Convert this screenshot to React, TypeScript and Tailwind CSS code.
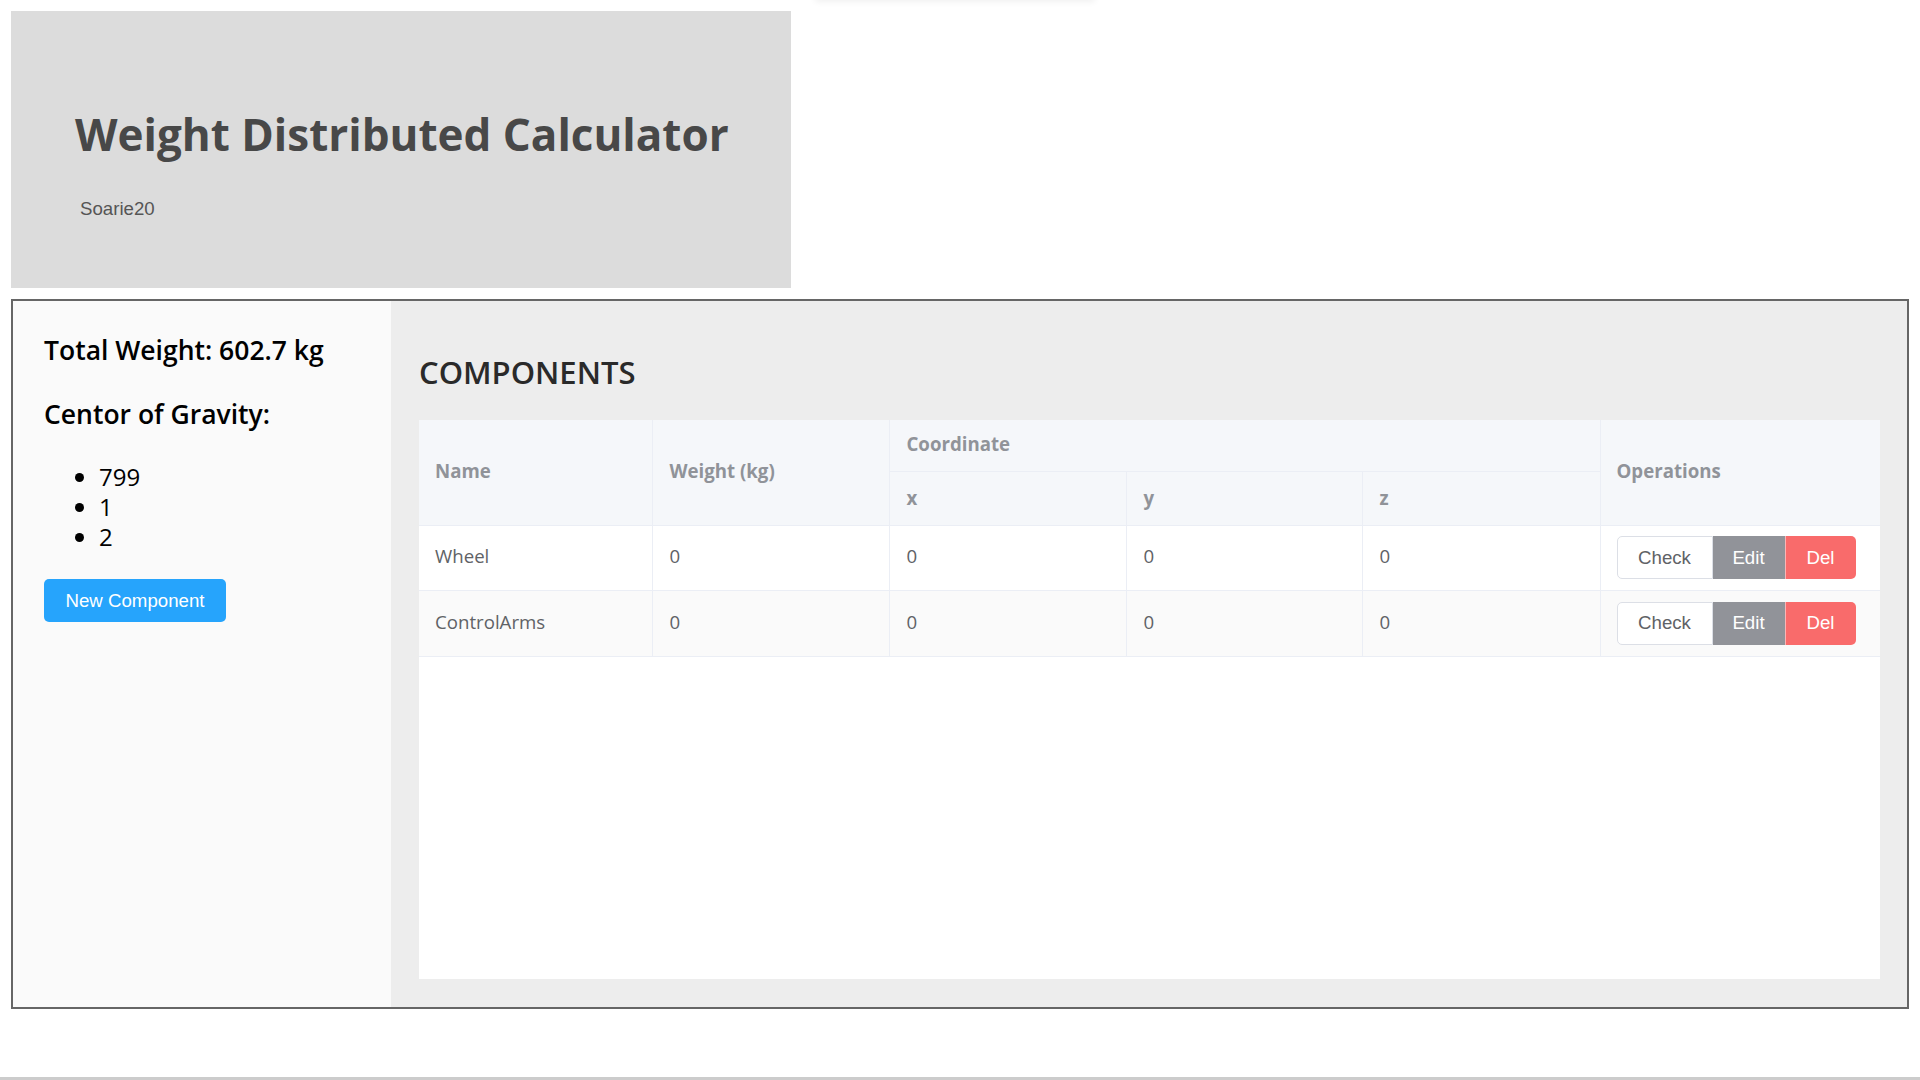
const lucida = "font-['Open_Sans','DejaVu_Sans',sans-serif]"
const helv = "font-['Liberation_Sans',Arial,sans-serif]"

const rows = [
  { name: 'Wheel', weight: 0, x: 0, y: 0, z: 0 },
  { name: 'ControlArms', weight: 0, x: 0, y: 0, z: 0 },
]

function Operations() {
  return (
    <div className={`flex h-[43px] text-[18.67px] ${helv}`}>
      <button className="w-[96px] rounded-l-[5px] border border-[#dcdfe6] bg-white text-[#606266]">Check</button>
      <button className="w-[72px] bg-[#919399] text-white">Edit</button>
      <button className="w-[71px] rounded-r-[5px] border-l border-white/50 bg-[#f96b6b] text-white">Del</button>
    </div>
  )
}

export default function App() {
  return (
    <div className="relative min-h-[1080px] bg-white overflow-hidden">
      {/* faint shadow of something scrolled above the top edge */}
      <div className="absolute -top-[20px] left-[815px] h-[20px] w-[280px] shadow-[0_2px_6px_rgba(0,0,0,0.06)]"></div>

      <div className="px-[11px] pt-[11px]">
        <header className="w-[780px] h-[277px] bg-[#dcdcdc] pt-[101px]">
          <h1 className={`pl-[64px] text-[44px] leading-[45px] font-bold text-[#484848] ${lucida}`}>
            Weight Distributed Calculator
          </h1>
          <p className={`mt-[43px] pl-[69px] text-[18.67px] leading-[18.67px] text-[#555] ${helv}`}>Soarie20</p>
        </header>

        <div className="mt-[11px] flex h-[710px] border-2 border-[#666]">
          <aside className={`w-[378px] bg-[#fafafa] pl-[31px] pt-[36px] text-black ${lucida}`}>
            <h3 className="text-[26.5px] leading-[27px] font-semibold">Total Weight: 602.7 kg</h3>
            <h3 className="mt-[37px] text-[26.5px] leading-[27px] font-semibold">Centor of Gravity:</h3>
            <ul className="mt-[34px] list-disc pl-[55px] text-[24px] leading-[30px]">
              <li className="h-[30px]">799</li>
              <li className="h-[30px]">1</li>
              <li className="h-[30px]">2</li>
            </ul>
            <button className={`mt-[27px] h-[43px] w-[182px] rounded-[5px] bg-[#26a4fc] text-[18.67px] text-white ${helv}`}>
              New Component
            </button>
          </aside>

          <main className="flex-1 bg-[#ededed] pl-[28px] pr-[27px] pt-[55px] pb-[28px]">
            <h2 className={`text-[31px] leading-[32px] font-semibold text-[#2a2a2a] ${lucida}`}>COMPONENTS</h2>
            <div className="mt-[32px] h-[559px] bg-white">
              <table className={`w-full table-fixed border-collapse text-[18.67px] ${lucida}`}>
                <colgroup>
                  <col className="w-[234px]" />
                  <col className="w-[237px]" />
                  <col className="w-[237px]" />
                  <col className="w-[236px]" />
                  <col className="w-[237px]" />
                  <col className="w-[280px]" />
                </colgroup>
                <thead className="bg-[#f5f7fa] text-[#909399] font-bold text-left">
                  <tr className="h-[51px]">
                    <th rowSpan={2} className="border-b border-r border-[#ebeef5] pl-4 pb-[3px] font-bold">Name</th>
                    <th rowSpan={2} className="border-b border-r border-[#ebeef5] pl-4 pb-[3px] font-bold">Weight (kg)</th>
                    <th colSpan={3} className="border-b border-r border-[#ebeef5] pl-4 pb-[3px] font-bold">Coordinate</th>
                    <th rowSpan={2} className="border-b border-[#ebeef5] pl-4 pb-[3px] font-bold">Operations</th>
                  </tr>
                  <tr className="h-[54px]">
                    <th className="border-b border-r border-[#ebeef5] pl-4 font-bold">x</th>
                    <th className="border-b border-r border-[#ebeef5] pl-4 font-bold">y</th>
                    <th className="border-b border-r border-[#ebeef5] pl-4 font-bold">z</th>
                  </tr>
                </thead>
                <tbody className="text-[#606266]">
                  {rows.map((r, i) => (
                    <tr key={r.name} className={i % 2 === 1 ? 'h-[66px] bg-[#fafafa]' : 'h-[65px] bg-white'}>
                      <td className="border-b border-r border-[#ebeef5] pl-4 pb-[3px]">{r.name}</td>
                      <td className="border-b border-r border-[#ebeef5] pl-4 pb-[3px]">{r.weight}</td>
                      <td className="border-b border-r border-[#ebeef5] pl-4 pb-[3px]">{r.x}</td>
                      <td className="border-b border-r border-[#ebeef5] pl-4 pb-[3px]">{r.y}</td>
                      <td className="border-b border-r border-[#ebeef5] pl-4 pb-[3px]">{r.z}</td>
                      <td className="border-b border-[#ebeef5] pl-4">
                        <Operations />
                      </td>
                    </tr>
                  ))}
                </tbody>
              </table>
            </div>
          </main>
        </div>
      </div>

      <div className="mt-[68px] h-[3px] w-full bg-[#cccccc]"></div>
    </div>
  )
}
